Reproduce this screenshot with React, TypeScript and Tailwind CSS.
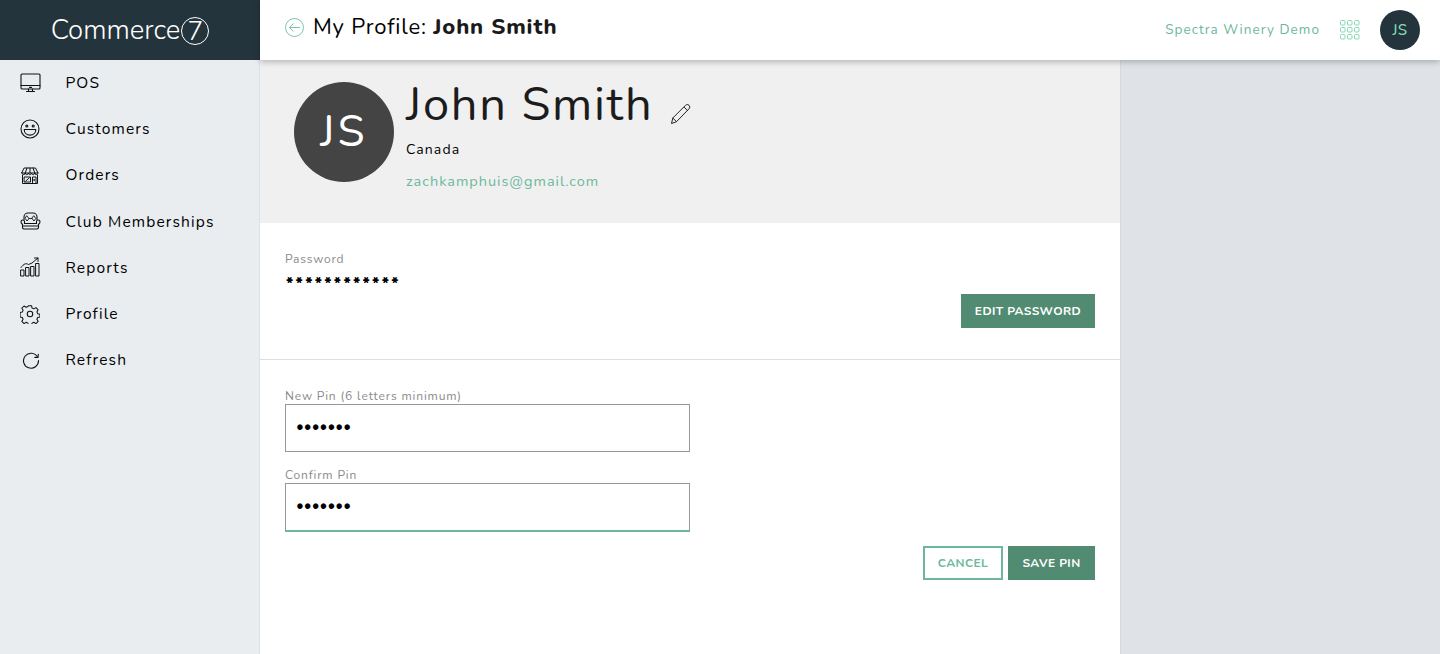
import React from "react";

const S = { fill: "none", stroke: "#111", strokeWidth: 1.1, strokeLinecap: "round" as const, strokeLinejoin: "round" as const };

const IconPos = () => (
  <svg width="21" height="20" viewBox="0 0 21 20" {...S}>
    <rect x="1" y="1" width="19" height="15" rx="1" />
    <path d="M1 12.500h19M6.500 18.500h8M8.500 16v2.500M12.500 16v2.500" />
    <path d="M9.500 14.300h2" strokeWidth="1.200" />
  </svg>
);
const IconSmile = () => (
  <svg width="20" height="20" viewBox="0 0 20 20" {...S}>
    <circle cx="10" cy="10" r="9" />
    <circle cx="6.800" cy="7" r="1" />
    <circle cx="13.200" cy="7" r="1" />
    <path d="M4.200 10.500h11.600c0 3.400-2.600 5.600-5.800 5.600s-5.800-2.200-5.800-5.600z" />
  </svg>
);
const IconStore = () => (
  <svg width="18" height="17" viewBox="0 0 18 17" {...S} strokeWidth="1">
    <path d="M3.500 1h11l2.500 5H1z" />
    <path d="M1 6c0 2.200 3.200 2.200 3.200 0 0 2.200 3.200 2.200 3.200 0 0 2.200 3.200 2.200 3.200 0 0 2.200 3.200 2.200 3.200 0 0 2.200 3.200 2.200 3.200 0" />
    <path d="M6 1L4.200 6M9 1v5M12 1l1.800 5" />
    <path d="M1.500 8v8.500h15V8M11.500 16.500V10h3.500v6.500M3.500 10h6v5h-6z" />
    <path d="M4.800 14l3.400-3" />
    <circle cx="13" cy="13" r=".4" />
  </svg>
);
const IconSofa = () => (
  <svg width="21" height="18" viewBox="0 0 21 18" {...S}>
    <path d="M4 7.500V5C4 2.500 6 1 8 1h5c2 0 4 1.500 4 4v2.500" />
    <path d="M4.500 11.500V9.500C4.500 7.500 1 7.300 1 9.800c0 1.500 1 2 1.500 2.500v3c0 1 .6 1.700 1.500 1.700h13c.9 0 1.500-.7 1.500-1.700v-3c.5-.5 1.500-1 1.500-2.500 0-2.500-3.500-2.300-3.500-.3v2z" />
    <path d="M2.500 14h16" />
    <path d="M7 4l2 2.500L7 9 5.200 6.500zM14 4l1.800 2.500L14 9l-2-2.500zM9 6.500h3" strokeWidth=".9" />
    <path d="M4.500 11.500h12" />
  </svg>
);
const IconChart = () => (
  <svg width="20" height="20" viewBox="0 0 20 20" {...S} strokeWidth="1">
    <rect x="1" y="13" width="3" height="6" />
    <rect x="6" y="10.500" width="3" height="8.500" />
    <rect x="11" y="9.500" width="3" height="9.500" />
    <rect x="16" y="6.500" width="3" height="12.500" />
    <path d="M1 10.500C4 6.500 6 6 8.500 7.500L12 6l6-5M14.500 1H18v3.500" />
  </svg>
);
const IconGear = () => (
  <svg width="20" height="20" viewBox="0 0 24 24" {...S} strokeWidth="1.300">
    <circle cx="12" cy="12" r="3.300" />
    <path d="M10 1.500h4l.6 3 2.300 1 2.600-1.600 2.800 2.800-1.600 2.600 1 2.300 2.800.6v3.600l-2.800.6-1 2.300 1.600 2.600-2.800 2.800-2.600-1.600-2.300 1-.6 2.800h-4l-.6-2.800-2.300-1-2.600 1.600-2.800-2.800 1.600-2.600-1-2.300-2.800-.6V10.200l2.800-.6 1-2.300-1.600-2.600 2.800-2.800 2.600 1.600 2.300-1z" transform="translate(.6 .6) scale(.95)" />
  </svg>
);
const IconRefresh = () => (
  <svg width="18" height="18" viewBox="0 0 18 18" {...S}>
    <path d="M15.500 6A7.500 7.500 0 1 0 16.500 9.500" />
    <path d="M12.800 6.400l3.200.1.300-3.300" />
  </svg>
);

const nav: [string, React.ReactNode, string][] = [
  ["POS", <IconPos />, "pl-[20px]"],
  ["Customers", <IconSmile />, "pl-[20px]"],
  ["Orders", <IconStore />, "pl-[21px]"],
  ["Club Memberships", <IconSofa />, "pl-[20px]"],
  ["Reports", <IconChart />, "pl-[20px]"],
  ["Profile", <IconGear />, "pl-[20px]"],
  ["Refresh", <IconRefresh />, "pl-[22px]"],
];

export default function App() {
  return (
    <div className="flex h-[654px] w-[1440px] overflow-hidden bg-[#dfe3e7] font-['Nunito','Lato',sans-serif] text-black">
      <aside className="flex h-full w-[260px] shrink-0 flex-col bg-[#e9edf0]">
        <div className="flex h-[60px] items-center justify-center bg-[#23343c] text-white">
          <span className="mt-[2px] text-[27.5px] font-light leading-none">Commerce</span>
          <span className="ml-[1px] mt-[2px] flex h-[28px] w-[28px] items-center justify-center rounded-full border-[1.5px] border-white text-[27px] font-light leading-none">7</span>
        </div>
        <nav className="mt-[-0.4px] flex flex-1 flex-col border-r border-[#dde1e4]">
          {nav.map(([label, icon, pad]) => (
            <div key={label} className="flex h-[46.2px] items-center">
              <span className={`flex w-[65.5px] shrink-0 items-center ${pad}`}>{icon}</span>
              <span className="text-[15.5px] tracking-[1.15px] text-black">{label}</span>
            </div>
          ))}
        </nav>
      </aside>

      <div className="flex min-w-0 flex-1 flex-col">
        <header className="relative z-10 flex h-[60px] shrink-0 items-center bg-white pl-[25px] pr-[20px] shadow-[0_2px_6px_rgba(0,0,0,0.25)]">
          <svg width="19" height="19" viewBox="0 0 19 19" fill="none" stroke="#7cc5a8" strokeWidth="1" className="mb-[5px]">
            <circle cx="9.500" cy="9.500" r="9" />
            <path d="M15 9.500H4.500M8.500 5.500l-4 4 4 4" />
          </svg>
          <h1 className="mb-[7px] ml-[9px] text-[22px] font-normal leading-none tracking-[0.8px]">
            My Profile: <b className="font-extrabold tracking-[0.9px] text-[#1a1a1a]">John Smith</b>
          </h1>
          <span className="ml-auto text-[13.5px] tracking-[1.05px] text-[#6bb89c]">Spectra Winery Demo</span>
          <svg width="20" height="20" viewBox="0 0 20 20" fill="none" stroke="#85dab5" strokeWidth="1" className="ml-[20px]">
            {[0, 7, 14].flatMap((y) => [0, 7, 14].map((x) => <rect key={`${x}-${y}`} x={x + 0.5} y={y + 0.5} width="4.500" height="4.500" rx="1" />))}
          </svg>
          <span className="ml-[20px] flex h-[40px] w-[40px] items-center justify-center rounded-full bg-[#23343c] text-[15px] font-medium tracking-[0.5px] text-[#85dab5]">JS</span>
        </header>

        <div className="flex min-h-0 flex-1">
          <main className="w-[861px] shrink-0 border-r border-[#d5d9dc] bg-white">
            <section className="flex h-[163px] bg-[#f0f0f0] pl-[34px] pt-[22px]">
              <div className="flex h-[100px] w-[100px] items-center justify-center rounded-full bg-[#444444] text-[44px] tracking-[3px] text-white">JS</div>
              <div className="ml-[12px] flex flex-col items-start">
                <div className="flex items-center">
                  <span className="mt-[-7px] text-[47px] font-normal leading-[60px] tracking-[1.7px] text-[#1c1c1c]">John Smith</span>
                  <svg width="22" height="22" viewBox="0 0 22 22" fill="none" stroke="#222" strokeWidth="1" strokeLinejoin="round" className="ml-[17px] mt-[11px]">
                    <path d="M1.500 20.500l1.300-5.500L15.500 2.300c1-1 2.500-1 3.500 0s1 2.500 0 3.500L6.500 18.700z" />
                    <path d="M14 4l4 4M2.800 15l3.700 3.700" />
                  </svg>
                </div>
                <span className="mt-[5px] text-[14px] leading-[20px] tracking-[1.1px]">Canada</span>
                <span className="mt-[11px] text-[14.500px] leading-[20px] tracking-[0.97px] text-[#6bb89c]">zachkamphuis@gmail.com</span>
              </div>
            </section>

            <section className="flex h-[137px] flex-col border-b border-[#dedede] px-[25px] pt-[28px]">
              <label className="mt-[1px] text-[12px] leading-[15px] tracking-[0.8px] text-[#8a8a8a]">Password</label>
              <span className="mt-[9px] h-[16px] pl-[1px] text-[16px] font-extrabold leading-[16px] tracking-[2.3px]">************</span>
              <button className="mt-[2px] flex h-[34px] w-[134px] items-center justify-center self-end bg-[#518b72] text-[12px] font-bold tracking-[0.4px] text-white">EDIT PASSWORD</button>
            </section>

            <section className="flex flex-col px-[25px] pt-[29px]">
              <label className="text-[12px] leading-[15px] tracking-[0.85px] text-[#8a8a8a]">New Pin (6 letters minimum)</label>
              <input type="password" readOnly value="1234567" className="h-[48px] w-[405px] border border-[#979797] bg-white pb-[4px] pl-[10px] text-[15px] tracking-[0px] outline-none" />
              <label className="mt-[16px] text-[12px] leading-[15px] tracking-[0.85px] text-[#8a8a8a]">Confirm Pin</label>
              <input type="password" readOnly value="1234567" className="h-[49px] w-[405px] border border-b-2 border-[#979797] border-b-[#6bb89c] bg-white pb-[4px] pl-[10px] text-[15px] tracking-[0px] outline-none" />
              <div className="mt-[14px] flex justify-end gap-[5px]">
                <button className="h-[34px] w-[80px] border-2 border-[#6bb89c] bg-white text-[12px] font-bold tracking-[0.4px] text-[#6bb89c]">CANCEL</button>
                <button className="h-[34px] w-[87px] bg-[#518b72] text-[12px] font-bold tracking-[0.4px] text-white">SAVE PIN</button>
              </div>
            </section>
          </main>
          <div className="flex-1 bg-[#dfe3e7]" />
        </div>
      </div>
    </div>
  );
}
